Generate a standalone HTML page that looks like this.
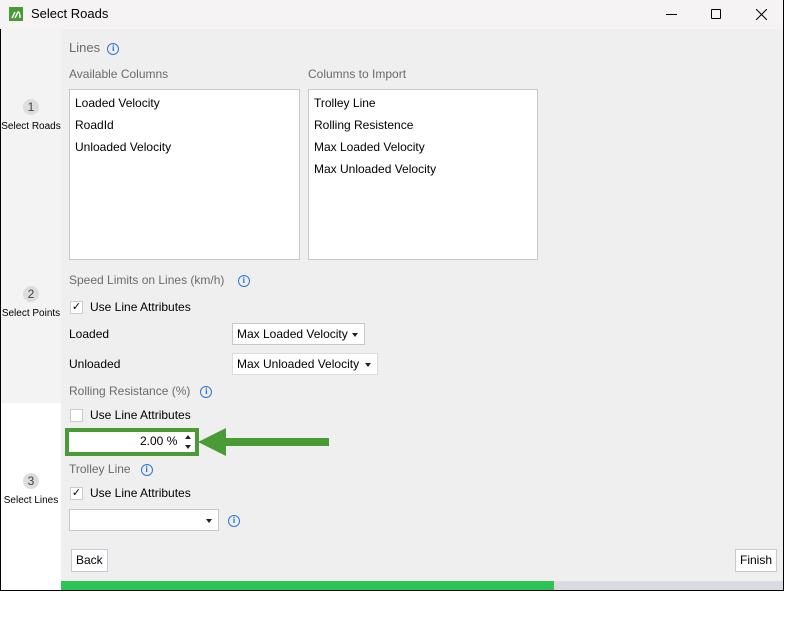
<!DOCTYPE html>
<html><head><meta charset="utf-8"><style>
*{margin:0;padding:0;box-sizing:border-box}
body{width:797px;height:617px;background:#fff;font-family:"Segoe UI","Liberation Sans",sans-serif;font-size:12px;color:#000;position:relative;overflow:hidden}
.win{position:absolute;left:0;top:0;width:784px;height:591px;background:#efefef}
.title{position:absolute;left:0;top:0;width:783px;height:29px;background:#f5f3f3}
.ab{position:absolute}
.side{position:absolute;left:0;top:29px;width:61px;height:374px;background:#f3f3f3}
.side2{position:absolute;left:0;top:403px;width:61px;height:187px;background:#fff}
.step{position:absolute;left:1px;width:60px;text-align:center;font-size:10px;color:#000}
.step .n{display:block;width:16px;height:16px;border-radius:8px;background:#ddd;margin:0 auto 6px;font-size:12px;line-height:16px;color:#444}
.gray{color:#6b6b6b;font-size:12px}
.box{position:absolute;background:#fff;border:1px solid #c8c8c8}
.box div{height:22px;line-height:22px;padding-left:5px;font-size:12px}
.info{display:inline-block;width:12px;height:12px;border:1.3px solid #2b78d0;border-radius:50%;color:#2b78d0;font-size:9px;line-height:9px;text-align:center;font-weight:bold;font-family:"Liberation Serif",serif;vertical-align:middle}
.cb{position:absolute;width:13px;height:13px;border:1px solid #ccc;background:#fff;font-size:11px;line-height:11px;text-align:center}
.sel{position:absolute;background:#fff;border:1px solid #c8c8c8;height:22px;line-height:20px;padding-left:4px;font-size:12px}
.sel:after{content:"";position:absolute;right:6px;top:9px;border-left:3px solid transparent;border-right:3px solid transparent;border-top:4px solid #222}
.btn{position:absolute;background:#fff;border:1px solid #c9c9d6;height:23px;line-height:21px;padding:0 4px;font-size:12px}
</style></head><body>
<div class="win">
<div class="title">
 <div class="ab" style="left:9px;top:7px;width:14px;height:14px;background:#4b9b35"></div>
 <svg class="ab" style="left:9px;top:7px" width="14" height="14"><path d="M3 11 L6 5 M6 11 L9 5 Q11 5 11 11" stroke="#fff" stroke-width="1.4" fill="none"/></svg>
 <div class="ab" style="left:31px;top:6px;font-size:13px">Select Roads</div>
 <div class="ab" style="left:666px;top:14px;width:11px;height:1px;background:#000"></div>
 <div class="ab" style="left:711px;top:9px;width:10px;height:10px;border:1px solid #000;border-radius:1px"></div>
 <svg class="ab" style="left:756px;top:9px" width="11" height="11"><path d="M0 0L11 11M11 0L0 11" stroke="#000" stroke-width="1"/></svg>
</div>
<div class="side"></div><div class="side2"></div>
<div class="step" style="top:99px"><span class="n">1</span>Select Roads</div>
<div class="step" style="top:286px"><span class="n">2</span>Select Points</div>
<div class="step" style="top:473px"><span class="n">3</span>Select Lines</div>

<div class="ab gray" style="left:69px;top:40px;font-size:13px">Lines &nbsp;<span class="info">i</span></div>
<div class="ab gray" style="left:69px;top:67px">Available Columns</div>
<div class="ab gray" style="left:308px;top:67px">Columns to Import</div>
<div class="box" style="left:69px;top:89px;width:231px;height:171px;padding-top:2px"><div>Loaded Velocity</div><div>RoadId</div><div>Unloaded Velocity</div></div>
<div class="box" style="left:308px;top:89px;width:230px;height:171px;padding-top:2px"><div>Trolley Line</div><div>Rolling Resistence</div><div>Max Loaded Velocity</div><div>Max Unloaded Velocity</div></div>

<div class="ab gray" style="left:69px;top:273px">Speed Limits on Lines (km/h) &nbsp;&nbsp;&nbsp;<span class="info">i</span></div>
<div class="cb" style="left:70px;top:301px">✓</div><div class="ab" style="left:90px;top:300px">Use Line Attributes</div>
<div class="ab" style="left:69px;top:327px">Loaded</div>
<div class="sel" style="left:232px;top:323px;width:133px">Max Loaded Velocity</div>
<div class="ab" style="left:69px;top:357px">Unloaded</div>
<div class="sel" style="left:232px;top:353px;width:146px;border-color:#ddd">Max Unloaded Velocity</div>
<div class="ab gray" style="left:69px;top:384px">Rolling Resistance (%) &nbsp;&nbsp;<span class="info">i</span></div>
<div class="cb" style="left:70px;top:409px"></div><div class="ab" style="left:90px;top:408px">Use Line Attributes</div>
<div class="ab" style="left:65px;top:428px;width:134px;height:28px;border:4px solid #4a9a35;background:#fff"></div>
<div class="ab" style="left:140px;top:434px">2.00 %</div>
<svg class="ab" style="left:183px;top:433px" width="10" height="18"><path d="M2 6L5 2L8 6Z M2 12L5 16L8 12Z" fill="#222"/></svg>
<svg class="ab" style="left:198px;top:427px" width="132" height="30"><path d="M0 15L28 1V11H131V19H28V29Z" fill="#4a9a35"/></svg>
<div class="ab gray" style="left:69px;top:462px">Trolley Line &nbsp;&nbsp;<span class="info">i</span></div>
<div class="cb" style="left:70px;top:487px">✓</div><div class="ab" style="left:90px;top:486px">Use Line Attributes</div>
<div class="sel" style="left:69px;top:509px;width:150px"></div>
<div class="ab" style="left:228px;top:513px"><span class="info">i</span></div>
<div class="btn" style="left:71px;top:549px">Back</div>
<div class="btn" style="left:735px;top:549px">Finish</div>
<div class="ab" style="left:61px;top:581px;width:493px;height:9px;background:#2ec455"></div>
<div class="ab" style="left:554px;top:581px;width:229px;height:9px;background:#d9dbe1"></div>
<div class="ab" style="left:0;top:29px;width:1px;height:562px;background:#000"></div>
<div class="ab" style="left:783px;top:0;width:1px;height:591px;background:#000"></div>
<div class="ab" style="left:0;top:590px;width:784px;height:1px;background:#000"></div>
</div>
</body></html>
